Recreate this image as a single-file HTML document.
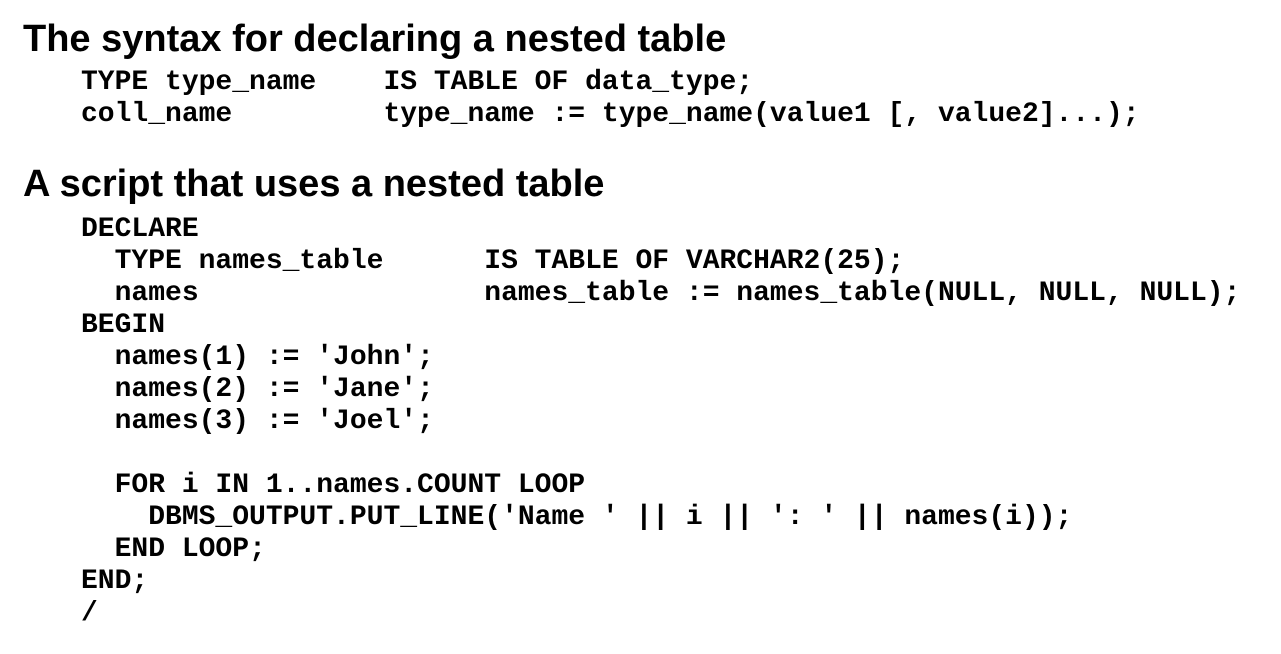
<!DOCTYPE html>
<html><head><meta charset="utf-8"><style>
body{margin:0;width:1281px;height:654px;background:#fff;overflow:hidden;position:relative}
h1{position:absolute;left:23px;margin:0;font:bold 38px/44px "Liberation Sans",Arial,sans-serif;color:#000;white-space:nowrap}
pre{position:absolute;left:81px;margin:0;font:bold 28px/32px "Liberation Mono","Courier New",monospace;color:#000}
</style></head><body>
<h1 style="top:17px">The syntax for declaring a nested table</h1>
<pre style="top:67px">TYPE type_name    IS TABLE OF data_type;
coll_name         type_name := type_name(value1 [, value2]...);</pre>
<h1 style="top:162px">A script that uses a nested table</h1>
<pre style="top:214px">DECLARE
  TYPE names_table      IS TABLE OF VARCHAR2(25);
  names                 names_table := names_table(NULL, NULL, NULL);
BEGIN
  names(1) := 'John';
  names(2) := 'Jane';
  names(3) := 'Joel';

  FOR i IN 1..names.COUNT LOOP
    DBMS_OUTPUT.PUT_LINE('Name ' || i || ': ' || names(i));
  END LOOP;
END;
/</pre>
</body></html>
